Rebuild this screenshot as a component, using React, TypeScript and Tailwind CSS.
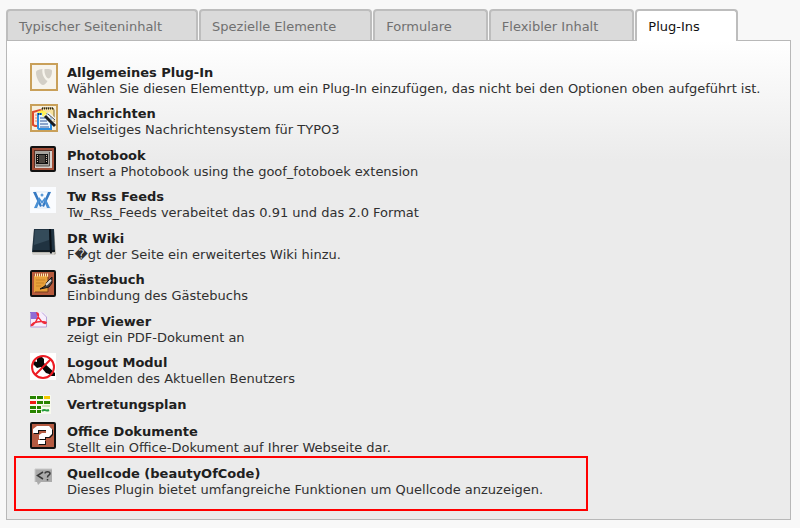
import { useState, type ReactNode } from "react";

const tabs = [
  "Typischer Seiteninhalt",
  "Spezielle Elemente",
  "Formulare",
  "Flexibler Inhalt",
  "Plug-Ins",
];

function GenericIcon() {
  return (
    <svg width="28" height="28" viewBox="0 0 28 28" aria-hidden="true">
      <rect x="1" y="1" width="26" height="26" fill="#f7f4ec" stroke="#c9a059" strokeWidth="2" />
      <path d="M7 7.500C8.500 6.500 10 6.300 12.500 6c-1 4 1.500 10.500 5 12-1 2-3 4-4.500 4C10 22 6 14.500 6 10c0-1.500.3-2 1-2.500z" fill="#d3cfc6" />
      <path d="M14.500 6c4 0 7.500 0 7.500 2 0 3.500-1.500 7.500-3.500 7.500S14 10.500 14.500 6z" fill="#d3cfc6" />
    </svg>
  );
}

function NewsIcon() {
  return (
    <svg width="28" height="28" viewBox="0 0 28 28" aria-hidden="true">
      <rect x="1" y="1" width="26" height="26" fill="#f6f0df" stroke="#c9a059" strokeWidth="2" />
      <path d="M12 4h11l1 2v12H12z" fill="#f7e2a0" stroke="#7a6428" />
      <path d="M12 4.500h12" stroke="#222" strokeWidth="2" strokeDasharray="1 1" />
      <path d="M3 8l7-2 2 1v15H5l-2-1z" fill="#fde6dc" stroke="#dc4a2c" strokeWidth="2" />
      <path d="M5 11h3M5 14h3M5 17h3" stroke="#e88a68" />
      <path d="M7 8l5-2 4 3-4 3z" fill="#ffee4a" />
      <path d="M8 10h11l2 2v13H9l-1-1z" fill="#e8f5ff" stroke="#2b8de0" strokeWidth="2" />
      <path d="M8 10h12" stroke="#163a66" strokeWidth="2" strokeDasharray="1 1" />
      <path d="M10 14h5M10 17h7M10 20h8M10 23h9" stroke="#31569a" />
      <path d="M12 9l3-2 2 3-2 3-3-1z" fill="#fff35c" />
      <path d="M15 11l10 10M18 9l7 7" stroke="#f4f4f4" strokeWidth="3" />
      <path d="M15 12l10 10" stroke="#1c1c1c" strokeWidth="3" />
      <path d="M18 10l7 6" stroke="#444" strokeWidth="1" />
    </svg>
  );
}

function PhotobookIcon() {
  return (
    <svg width="26" height="26" viewBox="0 0 26 26" aria-hidden="true">
      <rect x="1" y="1" width="24" height="24" rx="1" fill="#a34f38" stroke="#111" strokeWidth="2" />
      <path d="M4 4h18v18H4z" fill="#5a2e24" />
      <path d="M5 5h17v17H5z" fill="#d6d2ce" />
      <path d="M5 5h15v15H5z" fill="#a5a19c" />
      <path d="M19.500 6v14H6" fill="none" stroke="#57504c" />
      <rect x="6" y="8" width="12" height="10" fill="#111" />
      <rect x="9" y="9" width="6" height="8" fill="#4b4540" />
      <path d="M7.500 9v8M16.500 9v8" stroke="#d5b7a5" strokeDasharray="1 1" />
    </svg>
  );
}

function RssIcon() {
  return (
    <svg width="26" height="26" viewBox="0 0 26 26" aria-hidden="true">
      <rect width="26" height="26" fill="#fafcff" />
      <path d="M4 5h17M4 21h17" stroke="#dbe9f6" />
      <path d="M3 5h3l6 14-2 1zM21 5h-3l-6 14 2 1z" fill="#3579c2" />
      <path d="M4 21l5-11 3 4 3-4 5 11h-3l-3-7-2 3-2-3-3 7z" fill="#4a90d4" />
      <circle cx="12" cy="8" r="1.500" fill="#5b9bd8" />
    </svg>
  );
}

function WikiIcon() {
  return (
    <svg width="26" height="27" viewBox="0 0 26 27" aria-hidden="true">
      <path d="M4 0h20l2 25-2 1H3l-1-3z" fill="#b8b5ad" />
      <path d="M4 0h20l1 23H2z" fill="#203341" />
      <path d="M5 1h14v10L4 16z" fill="#344b5a" />
      <path d="M3 22h22" stroke="#111b22" strokeWidth="2" />
      <path d="M20 0l1 25" stroke="#080f15" strokeWidth="2" />
      <path d="M3 25h21" stroke="#eee" />
    </svg>
  );
}

function GuestbookIcon() {
  return (
    <svg width="26" height="27" viewBox="0 0 26 27" aria-hidden="true">
      <rect x="1" y="1" width="24" height="25" rx="1" fill="#b75b3d" stroke="#111" strokeWidth="2" />
      <path d="M4 6h14v16H4z" fill="#e8a03a" />
      <path d="M18 7v15H5" fill="none" stroke="#76401c" />
      <path d="M5 5h13" stroke="#fff0b0" strokeWidth="3" strokeDasharray="1 1" />
      <path d="M6 10h9M6 13h8M6 16h5" stroke="#c98428" />
      <path d="M10 19l5-3 2-4 5-5v6l-3 4-4 1z" fill="#444" stroke="#1c1512" />
      <path d="M16 15l5-5" stroke="#ddd" strokeWidth="2" />
    </svg>
  );
}

function PdfIcon() {
  return (
    <svg width="18" height="16" viewBox="0 0 18 16" aria-hidden="true">
      <path d="M0 0h13l4 4v11H0z" fill="#f7eefb" />
      <path d="M0 0h7v7H0z" fill="#8f6dd6" />
      <path d="M.5 1v14h16V5L12 .5" fill="none" stroke="#b7a3d8" />
      <path d="M7 1c3 0 1 7-4 12-3 2-2-2 4-3 5-1 10 0 9 1-2 2-8-4-9-10z" fill="none" stroke="#f02a3a" strokeWidth="1.500" />
    </svg>
  );
}

function LogoutIcon() {
  return (
    <svg width="26" height="27" viewBox="0 0 26 27" aria-hidden="true">
      <rect width="26" height="27" fill="#fff" />
      <path d="M7 4l4-1 3 3v4l11 10v3h-4l-2-2-3-1-5-6-4 1-4-4 1-3 3 1z" fill="#080808" />
      <circle cx="13" cy="14" r="11" fill="none" stroke="#ed1c24" strokeWidth="2" />
      <path d="M5 22L21 6" stroke="#ed1c24" strokeWidth="2" />
    </svg>
  );
}

function ScheduleIcon() {
  return (
    <svg width="21" height="20" viewBox="0 0 21 20" aria-hidden="true">
      <rect width="21" height="19" fill="#f8f9ef" />
      <path d="M0 1h6v3H0zM7 1h6v3H7zM7 6h6v3H7zM14 6h6v3h-6zM0 11h6v3H0zM7 11h4v3H7zM0 15h6v3H0zM7 15h4v3H7z" fill="#278400" />
      <path d="M14 1h6v3h-6z" fill="#f4c900" />
      <path d="M0 6h6v3H0z" fill="#ee1c16" />
      <path d="M12 16c3-3 3 1 7-1" fill="none" stroke="#249c3c" strokeWidth="2" />
      <path d="M12 11h8" stroke="#9acb7a" />
    </svg>
  );
}

function OfficeIcon() {
  return (
    <svg width="26" height="27" viewBox="0 0 26 27" aria-hidden="true">
      <rect x="1" y="1" width="24" height="25" rx="1" fill="#b55b42" stroke="#111" strokeWidth="2" />
      <g fill="#111" transform="translate(1 1)">
        <path d="M3 7l4-3h12l3 3v5l-3 3h-4v2H9v-4l3-2h4V8H8v3H3z" />
        <path d="M8 18h7v4H8z" />
      </g>
      <g fill="#fff">
        <path d="M3 7l4-3h12l3 3v5l-3 3h-4v2H9v-4l3-2h4V8H8v3H3z" />
        <path d="M8 18h7v4H8z" />
      </g>
    </svg>
  );
}

function CodeIcon() {
  return (
    <svg className="mt-1 ml-1" width="19" height="18" viewBox="0 0 19 18" aria-hidden="true">
      <path d="M1 1h17v13H7l-3 3-1-3H1z" fill="#ababab" />
      <path d="M1 14V1h17" fill="none" stroke="#c9c9c9" />
      <path d="M9 4L3.500 7.500 9 11" fill="none" stroke="#3a3a3a" strokeWidth="1.500" />
      <path d="M11 5.500C11 3 16 3 16 5.500c0 2-2.500 1.500-2.500 4M13.500 11v1.500" fill="none" stroke="#3a3a3a" strokeWidth="1.500" />
    </svg>
  );
}

type Plugin = { icon: ReactNode; title: string; text?: string; marked?: boolean };

const plugins: Plugin[] = [
  {
    icon: <GenericIcon />,
    title: "Allgemeines Plug-In",
    text: "Wählen Sie diesen Elementtyp, um ein Plug-In einzufügen, das nicht bei den Optionen oben aufgeführt ist.",
  },
  { icon: <NewsIcon />, title: "Nachrichten", text: "Vielseitiges Nachrichtensystem für TYPO3" },
  { icon: <PhotobookIcon />, title: "Photobook", text: "Insert a Photobook using the goof_fotoboek extension" },
  { icon: <RssIcon />, title: "Tw Rss Feeds", text: "Tw_Rss_Feeds verabeitet das 0.91 und das 2.0 Format" },
  { icon: <WikiIcon />, title: "DR Wiki", text: "F\uFFFDgt der Seite ein erweitertes Wiki hinzu." },
  { icon: <GuestbookIcon />, title: "Gästebuch", text: "Einbindung des Gästebuchs" },
  { icon: <PdfIcon />, title: "PDF Viewer", text: "zeigt ein PDF-Dokument an" },
  { icon: <LogoutIcon />, title: "Logout Modul", text: "Abmelden des Aktuellen Benutzers" },
  { icon: <ScheduleIcon />, title: "Vertretungsplan" },
  { icon: <OfficeIcon />, title: "Office Dokumente", text: "Stellt ein Office-Dokument auf Ihrer Webseite dar." },
  {
    icon: <CodeIcon />,
    title: "Quellcode (beautyOfCode)",
    text: "Dieses Plugin bietet umfangreiche Funktionen um Quellcode anzuzeigen.",
    marked: true,
  },
];

export default function App() {
  const [active, setActive] = useState(4);
  return (
    <main className="min-h-screen bg-[#f8f8f8] pt-[9px] pr-[9px] pb-2 pl-[6px] font-['DejaVu_Sans',Verdana,sans-serif] text-[13px] text-[#303030]">
      <div role="tablist" className="flex gap-px">
        {tabs.map((tab, i) => (
          <button
            key={tab}
            type="button"
            role="tab"
            aria-selected={i === active}
            onClick={() => setActive(i)}
            className={
              i === active
                ? "relative -mb-px h-8 rounded-t border-2 border-b-0 border-[#bdbdbd] bg-white pt-px pr-9 pl-[11px] whitespace-nowrap text-[#111]"
                : "h-[31px] rounded-t border-2 border-b-0 border-[#bdbdbd] bg-[#dadada] pt-0.5 pr-[34px] pl-[11px] whitespace-nowrap text-[#707070]"
            }
          >
            {tab}
          </button>
        ))}
      </div>
      <section className="border border-[#b8b8b8] bg-[#ebebeb] bg-[linear-gradient(#ffffff,#ebebeb_120px)] px-[23px] pt-[22px] pb-[21px]">
        <ul className="flex flex-col gap-[7px]">
          {plugins.map((p) => (
            <li key={p.title} className="relative flex items-start even:pb-px">
              <span className="w-[37px] shrink-0">{p.icon}</span>
              <a href="#" className="block pt-0.5 leading-4 whitespace-nowrap">
                <strong className="block text-[#202020]">{p.title}</strong>
                {p.text && <span className="block">{p.text}</span>}
              </a>
              {p.marked && (
                <span className="pointer-events-none absolute -top-2 -left-4 h-[55px] w-[574px] border-2 border-[#ff0000]" />
              )}
            </li>
          ))}
        </ul>
      </section>
    </main>
  );
}
